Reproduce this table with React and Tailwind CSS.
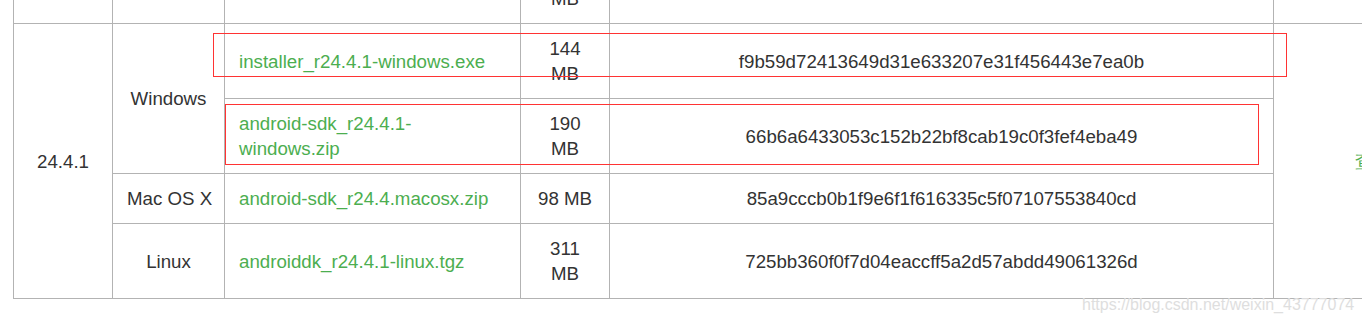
import React from "react";

const td = "border border-[#b3b3b3] px-[14px] py-[12px] align-middle";
const green = "text-[#4cae50]";

const App = () => {
  return (
    <div className="relative w-[1362px] h-[324px] overflow-hidden bg-white font-['Liberation_Sans',Arial,sans-serif] text-[18.7px] leading-[25px] text-[#333]">
      <table className="ml-[13px] mt-[-52px] w-[1461px] table-fixed border-collapse">
        <colgroup>
          <col className="w-[99px]" />
          <col className="w-[112px]" />
          <col className="w-[296px]" />
          <col className="w-[89px]" />
          <col className="w-[664px]" />
          <col className="w-[201px]" />
        </colgroup>
        <tbody>
          <tr>
            <td className={td}></td>
            <td className={td}></td>
            <td className={td}></td>
            <td className={`${td} text-center`}>
              191
              <br />
              MB
            </td>
            <td className={td}></td>
            <td className={`${td} border-b-0`}></td>
          </tr>
          <tr>
            <td rowSpan={4} className={`${td} text-center`}>24.4.1</td>
            <td rowSpan={2} className={`${td} text-center`}>Windows</td>
            <td className={`${td} ${green}`}>installer_r24.4.1-windows.exe</td>
            <td className={`${td} text-center`}>144 MB</td>
            <td className={`${td} text-center`}>f9b59d72413649d31e633207e31f456443e7ea0b</td>
            <td rowSpan={4} className={`${td} border-r-0 text-center ${green}`}>查看</td>
          </tr>
          <tr>
            <td className={`${td} ${green}`}>android-sdk_r24.4.1-windows.zip</td>
            <td className={`${td} text-center`}>190 MB</td>
            <td className={`${td} text-center`}>66b6a6433053c152b22bf8cab19c0f3fef4eba49</td>
          </tr>
          <tr>
            <td className={`${td} px-0 text-center whitespace-nowrap`}>Mac OS X</td>
            <td className={`${td} ${green}`}>android-sdk_r24.4.macosx.zip</td>
            <td className={`${td} text-center`}>98 MB</td>
            <td className={`${td} text-center`}>85a9cccb0b1f9e6f1f616335c5f07107553840cd</td>
          </tr>
          <tr>
            <td className={`${td} text-center`}>Linux</td>
            <td className={`${td} ${green}`}>androiddk_r24.4.1-linux.tgz</td>
            <td className={`${td} text-center`}>311 MB</td>
            <td className={`${td} text-center`}>725bb360f0f7d04eaccff5a2d57abdd49061326d</td>
          </tr>
        </tbody>
      </table>

      {/* red highlight boxes */}
      <div className="absolute left-[213px] top-[33px] w-[1074px] h-[44px] border border-[#f33]"></div>
      <div className="absolute left-[225px] top-[104px] w-[1034px] h-[61px] border border-[#f33]"></div>

      {/* watermark */}
      <div className="absolute left-[1082px] top-[296px] text-[16px] leading-[18px] text-[#dedede]">
        https://blog.csdn.net/weixin_43777074
      </div>
    </div>
  );
};

export default App;
